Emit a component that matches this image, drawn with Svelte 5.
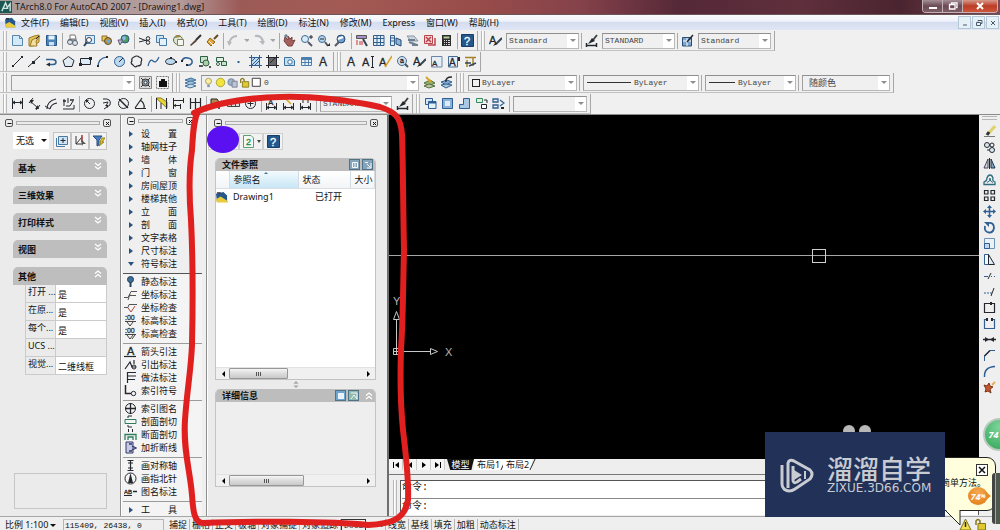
<script lang="ts">
	type Combo = { label: string; value: string; width: number; prefix?: string; cjk?: boolean };
	type Tool = string | Combo;

	const ink = '#24282e';
	const blue = '#2f5f93';
	const pale = '#bcd9ee';
	const gold = '#d8a520';

	// small helpers for the 13x13 glyphs
	const ln = (d: string, c = ink, w = 1) => `<path d="${d}" fill="none" stroke="${c}" stroke-width="${w}"/>`;
	const sh = (d: string, f: string, c = 'none') => `<path d="${d}" fill="${f}" stroke="${c}"/>`;
	const ci = (x: number, y: number, r: number, f = 'none', c = ink) =>
		`<circle cx="${x}" cy="${y}" r="${r}" fill="${f}" stroke="${c}"/>`;
	const tx = (t: string, x: number, y: number, s: number, c = ink) =>
		`<text x="${x}" y="${y}" font-size="${s}" font-family="Liberation Sans, sans-serif" fill="${c}" stroke="${c}" stroke-width=".3">${t}</text>`;
	const dimBar = ln('M1.500 6V13M11.500 6V13M1 10.500H12') + sh('M1 10.500L4 8.500V12.500ZM12 10.500L9 8.500V12.500Z', ink);

	const icons: Record<string, string> = {
		new: sh('M1.500 1.500H8.500L11.500 4.500V11.500H1.500Z', '#d4e9f7', '#5788b0') + ln('M8.500 1.500V4.500H11.500', '#5788b0'),
		open: sh('M1 4L6 2L11 1V8L5 12H1Z', '#e4c25a', '#9b7a28') + sh('M4 6L12 2L8 7L9 12L2 12Z', '#f4dfa0', '#9b7a28') + ln('M8 5L11 2', ink),
		save: sh('M1.500 1.500H11.500V11.500H1.500Z', '#4b83b8', '#27568a') + sh('M3.500 1.500H9.500V5.500H3.500Z', '#e5f0f8') + sh('M4 8H9V11.500H4Z', '#cfe0ee'),
		print: sh('M4 1H9L10 5H4Z', '#fff', '#777') + ci(4, 8, 2.5, '#dde3ea', '#5a6470') + ci(9, 9, 2.5, '#dde3ea', '#5a6470') + ln('M2 6H11', '#5a6470'),
		preview: sh('M2.500 1.500H11.500V9.500H2.500Z', '#dcebf6', '#4d7fae') + ci(6, 6, 2.5, '#fff', '#345') + ln('M4 8L1 12', '#345', 2),
		publish: sh('M2 2H7V7H2Z', '#e9c95c', '#8d6b20') + ci(8, 7, 3.5, '#b99440', '#5d5130') + sh('M6 6H11L9 10Z', '#6fa6d6'),
		globe: ci(8, 5, 4, '#4e9c62', '#2a5c80') + sh('M5 3L8 2L9 5L6 7Z', '#85bde3') + sh('M1 6H6L3 11Z', '#b7c5d6', '#657'),
		cut: ln('M1 4L9 7M1 8L9 6', ink) + ci(10, 4.5, 1.8) + ci(10, 8.5, 1.8),
		copy: sh('M1.500 1.500H8.500V8.500H1.500Z', '#cfe5f5', '#4779a5') + sh('M4.500 4.500H11.500V11.500H4.500Z', '#e3f1fa', '#4779a5'),
		paste: ci(6, 6, 4.5, '#dfe6d6', '#59724a') + sh('M5.500 5.500H11.500V11.500H5.500Z', '#f5f6f0', '#7c8460') + ln('M3 3L8 2', '#a68a3c', 2),
		brush: ln('M12 1L7 6', '#333', 2) + sh('M7 5L8 7L2 12L1 11Z', '#5a4a3a'),
		match: ln('M12 1L8 5', '#6a4a20', 2) + sh('M4 4L9 8L5 12L1 8Z', '#e0a83c', '#91611c') + ln('M3 7L7 11', '#fff'),
		undo: ln('M2 9Q4 2 10 2', '#b5b8bc', 2) + sh('M0 7L5 8L2 12Z', '#b5b8bc'),
		redo: ln('M2 2Q9 1 10 8', '#b5b8bc', 2) + sh('M6 7H12L10 11Z', '#b5b8bc'),
		dd: sh('M0 5H6L3 8Z', '#a5a5a5'),
		pan: sh('M2 3L5 6L5 2L7 5L9 3L9 7L12 6L9 12H5L1 7Z', '#a4605c', '#744') + ln('M1 2H5M3 0V4', '#567'),
		zoomrt: ci(5, 5, 3.5, '#d7eaf7', '#3e6a94') + ln('M8 8L12 12', '#556', 2) + ln('M9 3H13M11 1V5', ink),
		zoomwin: ci(5, 5, 3.5, '#b5d3ea', '#3e6a94') + ln('M8 8L11 12', '#556', 2) + ln('M3 5H7', ink) + sh('M10 12H13V9Z', ink),
		zoomprev: ci(7, 5, 4, '#6d9cc4', '#234e78') + ln('M5 8L1 12', '#556', 2) + ln('M4 5L9 3', '#fff', 2),
		props: sh('M1.500 1.500H11.500V4.500H1.500Z', '#a98fc7', '#555') + ln('M2 6V11M4 8H8M4 10H8', '#c33') + ln('M8 5L12 12', '#345', 2),
		grid: sh('M1.500 1.500H12V11.500H1.500Z', '#dcebf6', '#345f8a') + ln('M2 4.500H12M2 8.500H12M5 2V11M8.500 2V11', '#345f8a'),
		palettes: sh('M1.500 1.500H5.500V11.500H1.500Z', '#dcebf6', '#345f8a') + ln('M2 4H5M2 7H5', '#345f8a') + sh('M7 4L12 6V12L7 10Z', '#8cb5d8', '#27496e'),
		sheet: sh('M1 2H8L12 7L5 7Z', '#cdd6dd', '#8795a2') + ln('M2 6H9M3 8L11 11M6 11H12', '#6e7f90', 2),
		markup: sh('M1.500 1.500H9.500V9.500H1.500Z', '#f3d4d6', '#b9444c') + ln('M3 3L8 8M8 3L3 8M5 11H12V4', '#b9444c', 1.5),
		calc: sh('M2 1H11V12H2Z', '#2c2c2c') + sh('M3.500 2.500H9.500V4.500H3.500Z', '#b3cf9c') + ln('M4 6.500H10M4 8.500H10M4 10.500H10', '#ddd') + ln('M5.500 5V12M7.500 5V12', '#2c2c2c'),
		help: sh('M.5 .5H12.500V12.500H.5Z', '#24588c', '#173e68') + tx('?', 3, 11, 11, '#fff'),
		textA: tx('A', 2, 11, 12),
		textAI: tx('A', 0, 11, 11) + ln('M10.500 2V12M9 1.500H12M9 12.500H12'),
		textEdit: tx('A', 0, 11, 11) + ln('M13 1L6 12', gold, 1.5),
		find: ci(6, 6, 4.5, '#cfe0ee', '#4d6f92') + tx('a', 4, 8, 7) + ln('M9 9L12 12', '#456', 2),
		textStyle: tx('A', 0, 10, 11) + ln('M13 4L8 9', '#345', 2) + sh('M7 8L9 10L4 12Z', ink),
		textScale: sh('M1.500 1.500H12V12H1.500Z', '#e7eef5', '#6b87a6') + tx('A', 2, 11, 8),
		textJust: sh('M1.500 1.500H10.500V12H1.500Z', '#e7eef5', '#456c94') + tx('A', 2, 11, 10) + ln('M12 2V6', ink, 2),
		textSpace: ln('M1 2.500H12M3 5V12M9 3V11', '#a78128', 1.5) + ln('M1 8H7M5 11L12 8', '#345', 1.5),
		dimStyle: ln('M1.500 9V13M11.500 9V13M1 11.500H12', ink, 1.5) + ln('M12 1L8 6', '#444', 2) + sh('M7 4L10 7L3 10Z', ink),
		tableStyle: sh('M1.500 3.500H10.500V12H1.500Z', '#7ba4cc', '#234e78') + ln('M2 7H10M6 4V12', '#fff') + ln('M12 1L6 8', ink, 1.5),
		line: ln('M2 11L11 2') + sh('M1 10H3V12H1ZM10 1H12V3H10Z', ink),
		xline: ln('M0 12L12 1') + sh('M4 6H7V9H4Z', ink),
		pline: ln('M1 4.500H8Q11 5 11 7Q11 9.500 8 9.500H4', blue, 1.5) + sh('M1 9.500L5 7.500V11.500Z', ink),
		polygon: sh('M6.500 1.500L12 5.500L10 11.500H3L1 5.500Z', '#dfeaf3', ink),
		rect: sh('M1.500 3.500H11.500V9.500H1.500Z', '#dcebf6', ink) + sh('M0 8H3V11H0ZM10 2H13V5H10Z', ink),
		arc: ln('M2 12Q2 3 11 2', blue, 1.2) + sh('M1 10H3V12H1ZM10 1H12V3H10Z', ink),
		circle: ci(6.5, 6.5, 5, pale, blue) + ln('M6 7L10 3'),
		cloud: ln('M4 2Q7 0 9 2Q13 3 11 7Q12 11 7 11Q5 13 3 10Q0 8 2 6Q1 3 4 2Z', ink, 1.2),
		spline: ln('M1 11Q3 3 6 6T12 2', blue, 1.2),
		ellipse: '<ellipse cx="6.5" cy="6.500" rx="5" ry="3" fill="#bcd9ee" stroke="#24282e"/>' + sh('M6 2H8V4H6ZM11 6H13V8H11Z', ink),
		ellArc: ln('M1 6Q2 2 7 3Q12 4 11 8Q9 11 6 10', blue, 1.5) + sh('M0 5H2V7H0ZM5 9H7V11H5Z', ink),
		insert: sh('M2.500 1.500H9.500V7.500H2.500Z', '#c9e0c9', '#2c5f44') + ci(8, 8, 3, '#a6cfa9', '#2c5f44') + ln('M1 11H5M11 12H13', ink, 1.5),
		block: sh('M1.500 2.500H8.500V6.500H1.500Z', '#e4f0e4', '#2c5f44') + sh('M6.500 6.500H11.500V10.500H6.500Z', '#c9e0c9', '#2c5f44') + ci(3, 9, 1.5, '#fff', '#2c5f44'),
		point: sh('M5.500 6H7.500V8H5.500Z', blue),
		hatch: sh('M2 2H11V11H2Z', pale) + ln('M2.500 0V13M10.500 0V13M0 2.500H13M0 10.500H13M3 6L6 3M3 10L10 3M6 10L10 6', blue),
		gradient: sh('M2 2H11V11H2Z', '#666') + ln('M2.500 0V13M10.500 0V13M0 2.500H13M0 10.500H13M4 8L9 3', ink),
		region: sh('M1.500 2.500H8.500L11.500 5.500V10.500H1.500Z', '#c4deee', '#3b6f9c') + ci(7, 7, 2.2, '#fff', '#3b6f9c'),
		table: sh('M1.500 2.500H11.500V10.500H1.500Z', '#e7f1f9', '#4d7fae') + ln('M1 4H12', '#4d7fae', 2) + ln('M2 7.500H11M5 3V10M8.500 3V10', '#4d7fae'),
		gear: sh('M.5 .5H12.500V12.500H.5Z', '#dcdcdc', '#888') + ci(6.5, 6.5, 3.5, '#8aa2b9', '#333') + ci(6.5, 6.5, 1.5, '#fff', '#333') + ln('M2 2L4 4M11 2L9 4M2 11L4 9M11 11L9 9', '#333'),
		workspace: sh('M3 5H5V3H9V5H11V11H3Z', '#111') + '<path d="M.5 .5H12.500V12.500H.5Z" fill="none" stroke="#777" stroke-dasharray="2 1"/>',
		layers: sh('M1 4L7 2L12 4L6 6Z', '#7ba9cf', '#47749b') + sh('M1 7L7 5L12 7L6 9Z', '#a9c8e0', '#47749b') + sh('M1 10L7 8L12 10L6 12Z', '#c9dcea', '#47749b'),
		bulb: ci(6.5, 5, 3.5, '#f9ef9c', '#9a9560') + sh('M5 9H8V12H5Z', '#8795a8'),
		sun: ci(6.5, 6.5, 5, '#f2e43c', '#a39a28'),
		freeze: ci(5, 6, 4, '#9fb6cb', '#667f98') + sh('M6 5H12V12H6Z', '#b9c7d4', '#778'),
		lock: sh('M4 5.500H11.500V12H4Z', '#dfc832', '#857518') + ln('M2 7V3Q4 0 6 3V5', '#857518', 1.5),
		box: sh('M1.500 1.500H11V11H1.500Z', '#fff', '#222'),
		warn: sh('M6.500 1L12 12H1Z', '#f3e04a', '#7d7320') + ln('M6.500 4V9', ink, 1.5),
		layerMake: sh('M1 7L7 4L12 7L6 10Z', '#8fae70', '#57703e') + sh('M1 10L6 8L12 10L6 12Z', '#b9c7a5', '#57703e') + ln('M3 1L8 6', gold, 2),
		layerPrev: sh('M1 6L7 4L12 6L6 9Z', '#83abd0', '#32618e') + sh('M1 9L6 8L12 9L6 12Z', '#a9c8e0', '#32618e') + ln('M12 1Q5 1 6 6', ink, 1.5),
		dimLin: ln('M1.500 1V12M11.500 1V12M1 5.500H12') + sh('M1 5.500L4 3.500V7.500ZM12 5.500L9 3.500V7.500Z', ink),
		dimAl: ln('M2 4L10 11M1 6L5 1M8 13L12 8') + sh('M2 3H6L3 7ZM11 12H7L10 8Z', ink),
		dimArc: ln('M2 12Q2 4 11 2M5 12Q6 7 12 6', ink, 1.2) + ln('M0 9L5 12', ink),
		dimOrd: ln('M1 12H12V8M2 2V9M4 9H8L11 4M6 1V6') + ln('M1 4H4M8 3H12', ink, 1.5),
		dimRad: ci(6.5, 6.5, 5) + ln('M3 3L7 7') + sh('M3 3H6L3 6Z', ink),
		dimJog: ln('M3 2Q12 1 10 8L4 12M3 6L8 5L6 9') + sh('M5 8H8V11Z', ink),
		dimDia: ci(6.5, 6.5, 5) + ln('M2 2L11 11', ink, 1.5),
		dimAng: ln('M1 11.500H12M1 11L8 1M6 3Q11 6 10 11', ink, 1.2),
		quick: sh('M1 1L12 11V5L6 1Z', '#e9d436', '#8d7d16') + ln('M1.500 1V12M6 6V12M11.500 1V12'),
		base: ln('M1.500 1V12M1 3.500H11M1 8.500H8M11.500 1V6M8.500 7V12') + sh('M1 8.500L4 7V10Z', ink),
		cont: ln('M1.500 1V12M6.500 1V12M11.500 1V12M1 5.500H12', ink, 1.2),
		tag: sh('M1 2H7L9 5L6 8L1 7Z', '#b18b4d', ink) + ln('M7 8L12 4M9 9V12', ink, 1.5),
		tol: sh('M.5 3.500H12.500V9.500H.5Z', '#ddd', '#444') + ln('M4.500 4V9M8.500 4V9', '#444'),
		center: ci(6.5, 6.5, 5) + ln('M6.500 3.500V9.500M3.500 6.500H9.500'),
		dimEdit: dimBar + tx('A', 3, 8, 8),
		dimTedit: dimBar + ln('M3 1L9 7', gold, 1.5),
		dimUpd: dimBar + ln('M2 2.500H11M4 1V6M9 1V6'),
		vp1: sh('M1.500 1.500H8.500V7.500H1.500Z', '#cfe5f5', blue) + sh('M4.500 4.500H12V11.500H4.500Z', '#e3f1fa', blue) + ln('M5 5.500H12', blue, 2),
		vp2: sh('M1.500 1.500H11.500V11.500H1.500Z', '#8ab2d6', blue) + sh('M4 4H9V9H4Z', '#dcecf8'),
		vp3: sh('M5.500 1.500H11.500V11.500H1.500V7.500H5.500Z', '#a9c8e4', blue),
		vp4: sh('M1.500 1.500H7.500V5.500H1.500Z', '#e3f0d8', '#386') + sh('M6.500 7.500H11.500V11.500H6.500Z', '#fff', ink) + ln('M9 3H12V6', ink),
		vp5: ln('M1 2H6V5H1ZM1 8H6V11H1ZM8 3L12 6L8 9', blue, 1.3) + ln('M9 11H12', ink, 2),
		erase: ln('M1 11.500H12', '#777') + ln('M12 1L5 9', '#dfd36a', 3) + ln('M6 7L4 10', '#333', 3),
		copy2: ci(4, 4, 2.5, '#dce8f1', ink) + ci(9, 4, 2) + ci(9, 9, 2.5, '#dce8f1', ink) + ln('M4 9H6'),
		mirror: sh('M5 2V11H1Z', '#cdd9e2', '#445') + sh('M8 2V11H12Z', '#7da4c4', '#234') + ln('M6.500 1V12'),
		offset: ln('M1 11.500V9Q4 8 4 5Q5 2 7 2Q9 2 10 5Q9 8 12 9V11.500Z', '#2f6d7e', 1.3) + ln('M4 9.500Q7 9 7 5Q7 9 10 9.500', '#2f6d7e'),
		array: ln('M1.500 1.500H5V5H1.500ZM8 1.500H11.500V5H8ZM1.500 8H5V11.500H1.500ZM8 8H11.500V11.500H8Z', ink, 1.2),
		move: ln('M6.500 2V11M2 6.500H11', blue, 1.5) + sh('M6.500 0L9 3H4ZM6.500 13L9 10H4ZM0 6.500L3 4V9ZM13 6.500L10 4V9Z', blue),
		rotate: ln('M5 2Q11 1 11 7Q10 12 6 11.500Q1 11 2 5', blue, 1.8) + sh('M1 1H6V6Z', blue),
		scale: sh('M1.500 1.500H11.500V11.500H1.500Z', '#eaf2f8', '#6e93b5') + sh('M1.500 6.500H6.500V11.500H1.500Z', pale, blue),
		stretch: sh('M1.500 1.500H5.500V11.500H1.500Z', '#f5f8fb', blue) + sh('M5.500 1.500L11.500 11.500H5.500Z', '#dcebf6', ink),
		trim: ln('M1 7.500H5M8 7.500H9M11 7.500H12', blue) + ln('M5 10L8 4', ink),
		extend: ln('M1 8H3M4 8H6M7 8H9', blue) + ln('M8 11L11 3', ink),
		breakpt: ln('M1.500 2.500H11.500V11.500H1.500Z', ink, 1.2) + sh('M7 1H9V4H7Z', ink),
		breakk: ln('M4 2.500H1.500V11.500H11.500V2.500H9', blue, 1.2) + sh('M3 1H5V4H3ZM8 1H10V4H8Z', ink),
		join: ln('M0 6.500H13', ink, 1.5) + sh('M6 6.500L2 4V9ZM7 6.500L11 4V9Z', ink),
		chamfer: ln('M1.500 12V7L7 1.500H12', blue) + ln('M1.500 7L7 1.500', ink, 1.5),
		fillet: ln('M1.500 12Q1 2 12 1.500', blue, 1.5),
		explode: sh('M1 4L4 5L6 2L7 5L10 6L7 8L8 12L5 10L2 11L3 8Z', '#c4572e', '#7b341c') + ln('M9 4L12 1', '#e0b060', 2),
		selPlus: sh('M2.500 2.500H11.500V10.500H2.500Z', '#cfe5f5', '#4779a5') + ln('M7 4V9M4.500 6.500H9.500', ink) + ln('M.5 4V12.500H9', '#4779a5'),
		selArrow: ln('M2 2V10H8M2 10L8 3', '#333') + ln('M8 1V8', '#a33', 1.5) + sh('M7 5L12 10H9L8 12Z', '#555'),
		filter: sh('M1 2H10L7 6V11L5 12V6Z', '#4a7fc0', '#274d7f') + sh('M10 4H13L10 8H12L7 12L9 8H8Z', '#e9cf2e', '#96851b'),
		refresh: sh('M1.500 .5H9L11.500 3V12.500H1.500Z', '#f2faf3', '#5b9c70') + tx('2', 4, 10, 9, '#1d8a45'),
		dwg: sh('M0 3L8 1L12 5V12H1Z', '#27588c') + sh('M0 9L5 6L13 11V12.500H1Z', '#eacb3c') + ln('M1 2H5', ink, 1.5),
		// symbol list
		l0: ci(6.5, 4.5, 3, '#3f6d93', '#21435f') + ln('M6.500 7V12', '#21435f', 2),
		l1: ln('M0 9.500H4L7 3.500H13M4 12L6 6M6 7.500H12', '#555'),
		l2: ln('M0 6.500H4L5 3.500H13', '#555') + ln('M4 7L7 11L11 5', '#a44'),
		l3: ln('M1 7.500H12M3 8L6 12L9 8', '#444') + tx(':00', 1, 6, 7, '#333'),
		l4: ln('M1 7.500H12M3 8L6 12L9 8M8 12L11 8', '#444') + tx(':00', 1, 6, 7, '#333'),
		l5: tx('A', 3, 10, 11) + ln('M0 11.500H12', ink, 1.2),
		l6: ln('M1 11L6 4L8 9H12M10 2V6', ink, 1.2) + ci(10, 9, 2),
		l7: ln('M3.500 12V1.500H12M3 5H12M3 8.500H11', ink, 1.2),
		l8: ln('M1.500 1V9.500H7', ink, 1.5) + ci(9.5, 9.5, 2.2),
		l9: ci(6.5, 6.5, 5) + ln('M6.500 1V12M1 6.500H12', ink, 1.3),
		l10: ln('M1 4.500H12V8.500H1Z', '#2e7d5c') + ln('M4 3V1H8M4 10V12H8', ink),
		l11: ln('M1 12V6.500H12V12M4 12V9H9V12', '#2e7d5c', 1.3) + ln('M4.500 1V4M8.500 1V4', ink),
		l12: sh('M2 1H9V12H2Z', '#c5cbe6', '#34386b') + ln('M5 3H8M5 10H8M8 5L12 7L8 9', '#34386b', 1.3),
		l13: ln('M6.500 2V11M3.500 1.500H9.500M3.500 11.500H9.500M4 4H9M4 9H9', ink, 1.2),
		l14: ci(6.5, 6.5, 5.5) + sh('M6.500 1L9 11H4Z', ink),
		l15: ln('M0 10.500H8', ink) + tx('AB', 0, 9, 6) + ln('M9 6.500H13', ink, 1.5)
	};

	const rows: Tool[][][] = [
		[
			['new', 'open', 'save', '|', 'print', 'preview', 'publish', 'globe', '|', 'cut', 'copy', 'paste', 'brush', 'match', '|', 'undo', 'dd', 'redo', 'dd', '|', 'pan', 'zoomrt', 'zoomwin', 'zoomprev', '|', 'props', 'grid', 'palettes', 'sheet', 'markup', 'calc', '|', 'help'],
			['textStyle', { label: '文字样式', value: 'Standard', width: 73 }, '|', 'dimStyle', { label: '标注样式', value: 'STANDARD', width: 73 }, '|', 'tableStyle', { label: '表格样式', value: 'Standard', width: 73 }]
		],
		[
			['line', 'xline', 'pline', 'polygon', 'rect', 'arc', 'circle', 'cloud', 'spline', 'ellipse', 'ellArc', 'insert', 'block', 'point', 'hatch', 'gradient', 'region', 'table', 'textA'],
			['textA', 'textAI', 'textEdit', 'find', 'textStyle', 'textScale', 'textJust', 'textSpace']
		],
		[
			[{ label: '工作空间', value: '', width: 124 }, 'gear', 'workspace'],
			['layers', { label: '图层', value: '0', width: 218, prefix: 'layer' }, 'layerMake', 'layerPrev'],
			[{ label: '颜色', value: 'ByLayer', width: 109, prefix: 'box' }, '|', { label: '线型', value: 'ByLayer', width: 116, prefix: 'long' }, '|', { label: '线宽', value: 'ByLayer', width: 91, prefix: 'short' }, '|', { label: '打印样式', value: '随颜色', width: 88, cjk: true }]
		],
		[
			['dimLin', 'dimAl', 'dimArc', 'dimOrd', '|', 'dimRad', 'dimJog', 'dimDia', 'dimAng', '|', 'quick', 'base', 'cont', '|', 'tag', 'tol', 'center', '|', 'dimEdit', 'dimTedit', 'dimUpd', '|', { label: '当前标注样式', value: 'STANDARD', width: 72 }, 'dimStyle'],
			['vp1', 'vp2', 'vp3', 'vp4', 'vp5', '|', { label: '视口比例', value: '', width: 74 }]
		]
	];

	const menus = ['文件(F)', '编辑(E)', '视图(V)', '插入(I)', '格式(O)', '工具(T)', '绘图(D)', '标注(N)', '修改(M)', 'Express', '窗口(W)', '帮助(H)'];
	const sections = ['基本', '三维效果', '打印样式', '视图', '其他'];
	const other = [
		['打开 ...', '是'],
		['在原...', '是'],
		['每个...', '是'],
		['UCS ...', ''],
		['视觉...', '二维线框']
	];
	const topItems = ['设|置', '轴网柱子', '墙|体', '门|窗', '房间屋顶', '楼梯其他', '立|面', '剖|面', '文字表格', '尺寸标注', '符号标注'];
	const symbolGroups = [
		['静态标注', '坐标标注', '坐标检查', '标高标注', '标高检查'],
		['箭头引注', '引出标注', '做法标注', '索引符号'],
		['索引图名', '剖面剖切', '断面剖切', '加折断线'],
		['画对称轴', '画指北针', '图名标注']
	];
	const offsets = [0, 5, 9, 13];
	const modify = ['erase', 'copy2', 'mirror', 'offset', 'array', 'move', 'rotate', 'scale', 'stretch', 'trim', 'extend', 'breakpt', 'breakk', 'join', 'chamfer', 'fillet', 'explode'];
	const toggles = ['捕捉', '栅格', '正交', '极轴', '对象捕捉', '对象追踪', 'DUCS', 'DYN', '线宽', '基线', '填充', '加粗', '动态标注'];

	let pressed = $state<string[]>(['DUCS']);

	function toggle(name: string) {
		pressed = pressed.includes(name) ? pressed.filter((p) => p !== name) : [...pressed, name];
	}
</script>

{#snippet icon(name: string)}
	<svg class="icon" viewBox="0 0 13 13" aria-hidden="true">{@html icons[name]}</svg>
{/snippet}

{#snippet combo(c: Combo)}
	<span class="combo" style="width: {c.width}px">
		{#if c.prefix === 'layer'}
			{#each ['bulb', 'sun', 'freeze', 'lock', 'box'] as n}
				<span class="mini">{@render icon(n)}</span>
			{/each}
		{:else if c.prefix === 'box'}
			<span class="swatch"></span>
		{:else if c.prefix}
			<span class="stroke {c.prefix}"></span>
		{/if}
		<select aria-label={c.label} class:cjk={c.cjk}><option>{c.value}</option></select>
		<i></i>
	</span>
{/snippet}

{#snippet grip()}
	<div class="grip">
		<button class="knob" aria-label="自动隐藏"><svg viewBox="0 0 7 7"><path d="M1.500 3.500H5.500" /></svg></button>
		<span></span>
		<button class="knob" aria-label="关闭"><svg viewBox="0 0 7 7"><path d="M2 2L5 5M5 2L2 5" /></svg></button>
	</div>
{/snippet}

{#snippet chevron(up: boolean)}
	<svg class="chevron" class:up viewBox="0 0 8 8"><path d="M1 1L4 3.500L7 1M1 4.500L4 7L7 4.500" /></svg>
{/snippet}

{#snippet scrollbar(thumb: number)}
	<div class="scroll">
		<button aria-label="向左"><svg viewBox="0 0 4 6"><path d="M4 0V6L1 3Z" /></svg></button>
		<div class="thumb" style="width: {thumb}%"><b></b><b></b><b></b></div>
		<button class="end" aria-label="向右"><svg viewBox="0 0 4 6"><path d="M0 0V6L3 3Z" /></svg></button>
	</div>
{/snippet}

<div class="app">
	<header class="title">
		<svg class="logo" viewBox="0 0 13 13"><path fill="#1c5751" d="M0 0H13V13H0Z" /><path d="M2 11L6 2L8 7L11 3V11M4 8H9" fill="none" stroke="#cfe9e2" stroke-width="1.500" /></svg>
		<h1>TArch8.0 For AutoCAD 2007 - [Drawing1.dwg]</h1>
		<div class="winbtns">
			<button aria-label="最小化"><svg viewBox="0 0 10 8"><path d="M1 6H9" stroke-width="2" /></svg></button>
			<button aria-label="还原"><svg viewBox="0 0 10 8"><path d="M3.500 2V.8H9V5.500H8M1.500 2.500H7V7H1.500Z" stroke-width="1.300" /></svg></button>
			<button class="close" aria-label="关闭"><svg viewBox="0 0 10 8"><path d="M2 1L8 7M8 1L2 7" stroke-width="2" /></svg></button>
		</div>
	</header>

	<nav class="menu">
		{@render icon('dwg')}
		{#each menus as m}
			<button>{m}</button>
		{/each}
		<div class="mdi">
			<button aria-label="最小化文档"><svg viewBox="0 0 8 8"><path d="M2 6H6" /></svg></button>
			<button aria-label="还原文档"><svg viewBox="0 0 8 8"><path d="M3 2.500V1.500H7V4.500H6M1.500 3.500H5.500V6.500H1.500Z" /></svg></button>
			<button aria-label="关闭文档"><svg viewBox="0 0 8 8"><path d="M2 2L6 6M6 2L2 6" /></svg></button>
		</div>
	</nav>

	<div class="toolbars">
		{#each rows as row}
			<div class="row">
				{#each row as group}
					<div class="group">
						<span class="handle"></span>
						{#each group as tool}
							{#if tool === '|'}
								<span class="sep"></span>
							{:else if typeof tool === 'string'}
								<button class="tool" class:drop={tool === 'dd'} aria-label={tool}>{@render icon(tool)}</button>
							{:else}
								{@render combo(tool)}
							{/if}
						{/each}
					</div>
				{/each}
			</div>
		{/each}
	</div>

	<main>
		<aside class="props">
			{@render grip()}
			<div class="picker">
				<select aria-label="选择对象"><option>无选</option></select>
				<i></i>
				<div class="btns">
					{#each ['selPlus', 'selArrow', 'filter'] as n}
						<button aria-label={n}>{@render icon(n)}</button>
					{/each}
				</div>
			</div>
			{#each sections as s, i}
				<button class="section">{s}{@render chevron(i === sections.length - 1)}</button>
			{/each}
			<table>
				<tbody>
					{#each other as [k, v]}
						<tr><th scope="row">{k}</th><td class:blank={!v}>{v}</td></tr>
					{/each}
				</tbody>
			</table>
			<div class="hint"></div>
		</aside>

		<aside class="tmenu">
			{@render grip()}
			<ul>
				{#each topItems as item, i}
					<li>
						<span class="mark" class:open={i === topItems.length - 1}></span>
						<button>{#each item.split('|') as part}<span>{part}</span>{/each}</button>
					</li>
				{/each}
			</ul>
			{#each symbolGroups as g, gi}
				<ul class:first={gi === 0} class="ruled">
					{#each g as item, i}
						<li>{@render icon('l' + (offsets[gi] + i))}<button>{item}</button></li>
					{/each}
				</ul>
			{/each}
			<ul class="ruled">
				<li><span class="mark"></span><button><span>工</span><span>具</span></button></li>
			</ul>
		</aside>

		<aside class="xref">
			{@render grip()}
			<div class="xtools">
				<button class="attach" aria-label="附着">{@render icon('dwg')}</button>
				<button class="wide" aria-label="刷新">{@render icon('refresh')}<i></i></button>
				<button aria-label="帮助">{@render icon('help')}</button>
			</div>
			<section class="files">
				<h2>文件参照
					<button class="sq" aria-label="列表图"><svg viewBox="0 0 10 10"><path d="M2.500 2.500H7.500V7.500H2.500ZM5 3V8" /></svg></button>
					<button class="sq" aria-label="树状图"><svg viewBox="0 0 10 10"><path d="M2 2.500H5M4 4L7.500 7.500M8 3V8H4" /></svg></button>
				</h2>
				<div class="list">
					<table>
						<thead>
							<tr><th class="c0"></th><th class="c1 sorted">参照名</th><th class="c2">状态</th><th>大小</th></tr>
						</thead>
						<tbody>
							<tr><td>{@render icon('dwg')}</td><td>Drawing1</td><td class="state">已打开</td><td></td></tr>
						</tbody>
					</table>
				</div>
				{@render scrollbar(37)}
			</section>
			<div class="split"><svg viewBox="0 0 6 8"><path d="M0 3H6L3 0ZM0 5H6L3 8Z" /></svg></div>
			<section class="details">
				<h2>详细信息
					<button class="sq lit" aria-label="详细信息"><svg viewBox="0 0 10 10"><path d="M2.500 2.500H7.500V7.500H2.500Z" fill="#e4f0fa" /></svg></button>
					<button class="sq green" aria-label="预览"><svg viewBox="0 0 10 10"><path d="M2 8L5 4L8 8M2 2H8V8" /></svg></button>
					{@render chevron(true)}
				</h2>
				<div class="list"></div>
				{@render scrollbar(47)}
			</section>
		</aside>

		<div class="work">
			<div class="canvas">
				<div class="hair"></div>
				<div class="pick"></div>
				<svg class="ucs" viewBox="0 0 64 64">
					<path d="M3.500 53.500H9.500V59.500H3.500ZM3.500 56.500H40M6.500 59V24M3.500 24.500H9.500L6.500 16.500ZM40.500 53.500V59.500L47.500 56.500Z" />
					<text x="3" y="10">Y</text>
					<text x="55" y="61">X</text>
				</svg>
				<div class="fingers"><b></b><b></b></div>
			</div>
			<div class="tabs">
				<button aria-label="第一个"><svg viewBox="0 0 8 8"><path d="M1 1H2V7H1ZM7 1V7L3 4Z" /></svg></button>
				<button aria-label="上一个"><svg viewBox="0 0 8 8"><path d="M6 1V7L2 4Z" /></svg></button>
				<button aria-label="下一个"><svg viewBox="0 0 8 8"><path d="M2 1V7L6 4Z" /></svg></button>
				<button aria-label="最后一个"><svg viewBox="0 0 8 8"><path d="M6 1H7V7H6ZM1 1V7L5 4Z" /></svg></button>
				<button class="tab on">模型</button>
				<button class="tab">布局1</button>
				<button class="tab">布局2</button>
			</div>
			<div class="command">
				<span class="handle"></span>
				<div class="lines">
					<p>命令:</p>
					<label><span>命令:</span><input type="text" aria-label="命令" /></label>
				</div>
			</div>
		</div>

		<aside class="modify">
			{#each modify as n}
				<button aria-label={n}>{@render icon(n)}</button>
			{/each}
		</aside>
	</main>

	<footer>
		<button class="scale">比例 1:100 <i></i></button>
		<output>115409, 26438, 0</output>
		{#each toggles as t}
			<button class="tgl" class:mono={t.startsWith('D')} class:pressed={pressed.includes(t)} onclick={() => toggle(t)}>{t}</button>
		{/each}
		<span class="tray">{@render icon('warn')}{@render icon('lock')}</span>
	</footer>

	<div class="balloon">
		<button aria-label="关闭提示"><svg viewBox="0 0 10 10"><path d="M2 2L8 8M8 2L2 8" /></svg></button>
		<p>简单方法。</p>
		<svg class="tail" viewBox="0 0 20 18"><path class="body" d="M0 0L15 16V0Z" /><path d="M0 1L15 16V1" /></svg>
	</div>
	<div class="gauge"></div>
	<div class="pct orange">74<small>%</small></div>
	<div class="pct green">74</div>

	<div class="brand">
		<svg viewBox="0 0 36 36">
			<path d="M9 31V6Q10 2 15 4L31 13Q35 17 31 22L16 32Q10 36 5 32Q3 30 3 27V8" />
			<path d="M14 9V23Q14 27 18 25L22 22" />
			<path class="solid" d="M15 13L23 18L15 23ZM25 14H27V22H25Z" />
		</svg>
		<div>
			<strong>溜溜自学</strong>
			<span>ZIXUE.3D66.COM</span>
		</div>
	</div>

	<svg class="marker" viewBox="0 0 1000 530">
		<path d="M198 111C193 122 193 135 192 150C189 170 189 195 191 220C193 260 193 300 192 345C191 370 187 390 185 420C183 450 190 470 192 495C193 510 194 523 203 523C250 521 330 521 368 525C390 524 405 520 408 500C409 480 406 455 403 430C400 400 400 380 401 350C403 320 403 290 404 250C403 200 403 160 402 135C401 118 396 112 380 107C350 100 310 96 280 97C245 98 215 103 194 113" />
		<ellipse cx="223" cy="139.500" rx="16" ry="13.500" />
	</svg>
</div>

<style>
	:global(body) {
		margin: 0;
		background: #ededed;
	}

	.app {
		position: relative;
		display: flex;
		flex-direction: column;
		min-height: 100vh;
		overflow: hidden;
		background: #eeeeee;
		color: #111;
		font: 9px/13px 'Noto Sans', 'Noto Sans CJK SC', sans-serif;
	}

	button,
	select,
	input {
		margin: 0;
		padding: 0;
		border: 0;
		background: none;
		color: inherit;
		font: inherit;
		appearance: none;
	}

	button {
		display: flex;
		align-items: center;
		justify-content: center;
	}

	ul,
	h1,
	h2,
	p {
		margin: 0;
		padding: 0;
		list-style: none;
		font-weight: normal;
	}

	.icon {
		display: block;
		flex: none;
		width: 13px;
		height: 13px;
	}

	/* title and menu */
	.title {
		display: flex;
		align-items: center;
		height: 15px;
		background: linear-gradient(90deg, #a99a9a 0, #b39b9b 18%, #9c5a57 24%, #a35a54 34%, #984c4a 48%, #85424a 58%, #552838 68%, #5f2f3c 80%, #4a2430 90%, #7b4a54 100%);
		border-bottom: 1px solid #6c5558;
		box-sizing: border-box;
	}

	.title h1 {
		flex: 1;
		padding-left: 3px;
		font-family: 'Open Sans', sans-serif;
		font-size: 9px;
		line-height: 14px;
	}

	.logo {
		width: 12px;
		height: 12px;
	}

	.winbtns {
		display: flex;
		align-self: flex-start;
		margin-right: 2px;
		border: 1px solid #c4b2b7;
		border-top: 0;
		border-radius: 0 0 4px 4px;
		overflow: hidden;
	}

	.winbtns button {
		width: 20px;
		height: 12px;
		background: linear-gradient(#a58f96, #6b4a55 50%, #7d5f69);
		border-right: 1px solid #c4b2b7;
	}

	.winbtns .close {
		width: 34px;
		border: 0;
		background: linear-gradient(#d79a8c, #bb3c26 50%, #d0563b);
	}

	.winbtns svg {
		width: 10px;
		height: 8px;
		fill: none;
		stroke: #fff;
	}

	.menu {
		display: flex;
		align-items: center;
		gap: 11px;
		height: 15px;
		padding-left: 5px;
		background: linear-gradient(#fafbfd 0, #f0f3fa 40%, #d5ddf0 50%, #dfe6f5 100%);
	}

	.menu .icon {
		width: 11px;
		height: 11px;
		margin-right: -6px;
	}

	.mdi {
		display: flex;
		gap: 1px;
		margin-left: auto;
		padding-right: 1px;
	}

	.mdi button {
		width: 13px;
		height: 13px;
		background: #e6f0f7;
		border: 1px solid #b5c7d6;
		box-sizing: border-box;
	}

	.mdi svg {
		width: 8px;
		height: 8px;
		flex: none;
		fill: none;
		stroke: #4b5a6b;
	}

	/* toolbars */
	.toolbars {
		display: flex;
		flex-direction: column;
		gap: 1px;
		padding-top: 1px;
		background: #f0f0f0;
		border-bottom: 1px solid #8b8b8b;
	}

	.row {
		display: flex;
		height: 20px;
		box-sizing: border-box;
	}

	.group {
		display: flex;
		align-items: center;
		gap: 4px;
		padding: 0 3px;
		border-right: 1px solid #a6a6a6;
		border-bottom: 1px solid #c2c2c2;
	}

	.handle {
		flex: none;
		align-self: stretch;
		width: 2px;
		border: solid #b9b9b9;
		border-width: 0 1px;
		box-shadow: inset 1px 0 #fff;
	}

	.sep {
		width: 1px;
		height: 16px;
		margin-right: -1px;
		background: #a9a9a9;
	}

	.combo + .sep {
		margin-left: -2px;
	}

	.tool.drop {
		width: 5px;
		overflow: hidden;
		justify-content: flex-start;
	}

	.combo {
		display: flex;
		align-items: center;
		height: 16px;
		border: 1px solid #b8b8b8;
		border-top-color: #8f8f8f;
		border-left-color: #9f9f9f;
		box-sizing: border-box;
		background: #f0f0f0;
	}

	.combo select {
		flex: 1;
		min-width: 0;
		height: 14px;
		padding-left: 2px;
		color: #444;
		font: 8px/14px 'Liberation Mono', monospace;
	}

	.combo select.cjk {
		padding-left: 6px;
		font: 9px/14px 'Noto Sans CJK SC', sans-serif;
	}

	.combo i {
		width: 11px;
		height: 14px;
		background: #fff;
		display: flex;
		align-items: center;
		justify-content: center;
	}

	.combo i::after,
	.picker i::after,
	.xtools i,
	footer i {
		content: '';
		border: solid transparent;
		border-width: 3px 3px 0;
		border-top-color: #8e8e8e;
	}

	.mini {
		margin-left: 1px;
	}

	.mini .icon {
		width: 11px;
		height: 11px;
	}

	.swatch {
		width: 6px;
		height: 6px;
		margin: 0 0 0 3px;
		border: 1px solid #222;
	}

	.stroke {
		height: 1px;
		margin: 0 1px 0 3px;
		background: #333;
	}

	.stroke.long {
		width: 44px;
	}

	.stroke.short {
		width: 26px;
	}

	/* work area */
	main {
		display: flex;
		flex: 1;
	}

	.grip {
		display: flex;
		align-items: center;
		gap: 3px;
		height: 16px;
		box-sizing: border-box;
	}

	.grip > span {
		flex: 1;
		height: 2px;
		border: 1px solid #adadad;
	}

	.knob {
		width: 8px;
		height: 8px;
		border: 1px solid #555;
		border-radius: 2px;
		box-sizing: border-box;
	}

	.knob svg {
		width: 7px;
		height: 7px;
		flex: none;
		stroke: #111;
	}

	.chevron {
		width: 8px;
		height: 8px;
		fill: none;
		stroke: #fff;
		stroke-width: 1.2;
	}

	.chevron.up {
		transform: rotate(180deg);
	}

	.props {
		display: flex;
		flex-direction: column;
		flex: none;
		width: 121px;
		padding: 0 13px 7px;
		box-sizing: border-box;
		border-right: 1px solid #8d8d8d;
		background: #ebebeb;
	}

	.props .grip {
		margin: 0 -4px 0 -8px;
	}

	.picker {
		display: flex;
		align-items: center;
		height: 19px;
		margin-bottom: 9px;
	}

	.picker select {
		width: 26px;
		height: 17px;
		padding-left: 3px;
		background: #fff;
	}

	.picker i {
		display: flex;
		align-items: center;
		justify-content: center;
		width: 10px;
		height: 17px;
		background: #fff;
	}

	.picker i::after {
		border-top-color: #111;
	}

	.btns {
		display: flex;
		margin-left: auto;
	}

	.btns button {
		width: 18px;
		height: 18px;
		background: #f3f3f3;
		border: 1px solid #c4c4c4;
		box-sizing: border-box;
	}

	.section {
		flex: none;
		justify-content: space-between;
		height: 18px;
		margin-bottom: 9px;
		padding: 0 5px;
		border-radius: 5px 5px 0 0;
		background: #bebebe;
		font-weight: bold;
	}

	.section .chevron {
		margin-bottom: 5px;
	}

	.props table {
		width: 82px;
		margin: -9px 0 0 auto;
		border-collapse: collapse;
		table-layout: fixed;
	}

	.props th,
	.props td {
		height: 17px;
		padding: 0 0 0 2px;
		border: 1px solid #cbcbcb;
		border-top: 0;
		font-weight: normal;
		text-align: left;
		white-space: nowrap;
	}

	.props th {
		width: 27px;
		vertical-align: top;
	}

	.props td {
		padding-top: 2px;
		height: 15px;
		background: #fff;
	}

	.props td.blank {
		background: none;
	}

	.hint {
		height: 34px;
		margin: auto 0 0 1px;
		border: 1px solid #c6c6c6;
	}

	/* drawing-symbol menu */
	.tmenu {
		flex: none;
		width: 86px;
		padding-right: 4px;
		border-left: 1px solid #fff;
		border-right: 1px solid #8d8d8d;
		box-sizing: border-box;
		background: #efefef;
	}

	.tmenu .grip {
		padding: 0 8px 0 5px;
		height: 12px;
	}

	.tmenu ul {
		padding-bottom: 3px;
	}

	.tmenu ul.ruled {
		margin-left: 1px;
		padding-top: 1px;
		border-top: 1px solid #9b9b9b;
		background: #f4f4f4;
	}

	.tmenu ul.first {
		border-top-color: #555;
	}

	.tmenu ul.ruled:last-child {
		padding-bottom: 0;
	}

	.tmenu li {
		display: flex;
		align-items: center;
		height: 13px;
		padding-left: 1px;
	}

	.tmenu .ruled li {
		padding-left: 0;
	}

	.tmenu li button {
		width: 36px;
		margin-left: 4px;
		justify-content: space-between;
		white-space: nowrap;
	}

	.tmenu li > :first-child {
		margin-left: 1px;
	}

	.mark {
		display: flex;
		width: 13px;
		justify-content: center;
	}

	.mark::after {
		content: '';
		border: solid transparent;
		border-width: 3px 0 3px 4px;
		border-left-color: #27517f;
	}

	.mark.open::after {
		border-width: 4px 3px 0;
		border-color: #27517f transparent transparent;
	}

	/* external references */
	.xref {
		display: flex;
		flex-direction: column;
		flex: none;
		width: 182px;
		padding: 0 11px 29px 7px;
		border-left: 1px solid #fff;
		border-right: 2px solid #6f6f6f;
		box-sizing: border-box;
		background: #ebebeb;
	}

	.xref .grip {
		margin: 0 -2px 0 -1px;
	}

	.xtools {
		display: flex;
		margin: 2px 0 8px -7px;
		height: 17px;
	}

	.xtools button {
		width: 20px;
		height: 17px;
		border: 1px solid #d0d0d0;
		box-sizing: border-box;
		background: #f2f2f2;
	}

	.xtools .attach {
		width: 31px;
	}

	.xtools .wide {
		width: 24px;
		gap: 2px;
	}

	.xtools i {
		border-width: 3px 2px 0;
		border-top-color: #444;
	}

	.xref section {
		display: flex;
		flex-direction: column;
		border: 1px solid #c3c3c3;
		border-top: 0;
		border-radius: 5px 5px 0 0;
		overflow: hidden;
	}

	.files {
		flex: 1;
		background: #fff;
	}

	.details {
		height: 97px;
		background: #eeeeee;
	}

	.xref h2 {
		display: flex;
		align-items: center;
		gap: 2px;
		height: 13px;
		padding: 0 2px 0 6px;
		background: #bdbdbd;
		font-size: 9px;
		font-weight: bold;
	}

	.sq {
		width: 11px;
		height: 11px;
		background: #86a5ba;
		border: 1px solid #4f7288;
		box-sizing: border-box;
	}

	.sq:first-of-type {
		margin-left: auto;
	}

	.sq.lit {
		background: #6fa3d0;
	}

	.sq.green {
		background: #8fb9ad;
	}

	.sq svg {
		width: 10px;
		height: 10px;
		flex: none;
		fill: none;
		stroke: #f2f8fb;
	}

	h2 .chevron {
		margin-left: 4px;
	}

	.xref .list {
		flex: 1;
	}

	.xref table {
		width: 100%;
		border-collapse: collapse;
		table-layout: fixed;
	}

	.xref thead th {
		height: 17px;
		padding: 0 0 0 4px;
		border-right: 1px solid #d5dde3;
		border-bottom: 1px solid #dadfe3;
		background: linear-gradient(#fff, #f2f4f6);
		font-weight: normal;
		text-align: left;
		white-space: nowrap;
		box-sizing: border-box;
	}

	.xref thead .sorted {
		position: relative;
		background: linear-gradient(#f3fafd, #c8e6f5);
	}

	.sorted::after {
		content: '';
		position: absolute;
		top: 1px;
		left: 50%;
		border: solid transparent;
		border-width: 0 2px 2px;
		border-bottom-color: #47758f;
	}

	.c0 {
		width: 13px;
	}

	.c1 {
		width: 69px;
	}

	.c2 {
		width: 52px;
	}

	.xref td {
		height: 16px;
		padding: 0;
		white-space: nowrap;
	}

	.xref td .icon {
		width: 12px;
		height: 12px;
	}

	.xref td + td {
		padding-left: 4px;
	}

	.xref td.state {
		padding-left: 17px;
	}

	.scroll {
		display: flex;
		height: 11px;
		background: #f0f0f0;
		border-top: 1px solid #e2e2e2;
	}

	.scroll button {
		width: 13px;
	}

	.scroll button.end {
		margin-left: auto;
	}

	.scroll svg {
		width: 4px;
		height: 6px;
	}

	.thumb {
		display: flex;
		align-items: center;
		justify-content: center;
		gap: 1px;
		border: 1px solid #979797;
		border-radius: 1px;
		box-sizing: border-box;
		background: linear-gradient(#f5f5f5, #dcdcdc 50%, #c9c9c9);
	}

	.thumb b {
		width: 1px;
		height: 4px;
		background: #555;
	}

	.split {
		display: flex;
		align-items: center;
		justify-content: center;
		height: 9px;
	}

	.split svg {
		width: 6px;
		height: 7px;
		fill: #a5a5a5;
	}

	/* model space */
	.work {
		display: flex;
		flex: 1;
		flex-direction: column;
		min-width: 0;
	}

	.canvas {
		position: relative;
		flex: 1;
		background: #000;
		overflow: hidden;
	}

	.hair {
		position: absolute;
		top: 140px;
		left: 0;
		right: 0;
		height: 1px;
		background: #a5a5a5;
	}

	.pick {
		position: absolute;
		top: 134px;
		left: 423px;
		width: 12px;
		height: 12px;
		border: 1px solid #d0d0d0;
	}

	.ucs {
		position: absolute;
		top: 180px;
		left: 1px;
		width: 64px;
		height: 64px;
		fill: none;
		stroke: #c8c8c8;
	}

	.ucs text {
		fill: #b5b5b5;
		stroke: none;
		font: 11px 'Liberation Sans', sans-serif;
	}

	.fingers {
		position: absolute;
		right: 108px;
		bottom: 22px;
		display: flex;
		gap: 4px;
	}

	.fingers b {
		width: 12px;
		height: 12px;
		border-radius: 50%;
		background: #b8b8b8;
	}

	.tabs {
		display: flex;
		height: 11px;
		background: #eee;
	}

	.tabs button {
		width: 14px;
		border-right: 1px solid #ccc;
		box-sizing: border-box;
		background: #f6f6f6;
	}

	.tabs svg {
		width: 8px;
		height: 8px;
	}

	.tabs .tab {
		position: relative;
		width: 29px;
		border: 0;
		line-height: 10px;
		background: #fff;
	}

	.tabs .tab::after {
		content: '';
		position: absolute;
		top: 0;
		bottom: 0;
		right: -1px;
		width: 1px;
		background: #222;
		transform: skewX(-25deg);
	}

	.tabs .tab.on {
		width: 27px;
		background: #111;
		color: #fff;
		margin-left: 2px;
		clip-path: polygon(0 0, 100% 0, 90% 100%, 12% 100%);
	}

	.command {
		display: flex;
		height: 35px;
		margin-top: 4px;
		padding: 5px 0 1px 4px;
		border-top: 1px solid #777;
		box-sizing: content-box;
	}

	.lines {
		flex: 1;
		margin-left: 3px;
		padding-left: 1px;
		border: 1px solid #555;
		border-bottom: 0;
		background: #fff;
	}

	.lines p,
	.lines label {
		display: flex;
		height: 17px;
		line-height: 13px;
		font-family: 'Liberation Mono', 'Noto Sans CJK SC', monospace;
		font-size: 10px;
	}

	.lines p {
		border-bottom: 1px solid #888;
	}

	.lines label {
		line-height: 16px;
	}

	.lines input {
		flex: 1;
		min-width: 0;
	}

	.modify {
		display: flex;
		flex: none;
		flex-direction: column;
		align-items: center;
		gap: 3px;
		width: 21px;
		box-sizing: border-box;
		padding-top: 5px;
		background: #efefef;
	}

	.modify::before {
		content: '';
		width: 15px;
		height: 2px;
		margin-top: -4px;
		margin-bottom: 2px;
		border: solid #b5b5b5;
		border-width: 1px 0;
	}

	/* status bar */
	footer {
		display: flex;
		align-items: flex-end;
		height: 15px;
		padding-left: 5px;
		box-sizing: border-box;
		border-top: 1px solid #a5a5a5;
		background: #efefef;
		overflow: hidden;
	}

	footer button,
	footer output {
		height: 12px;
		line-height: 12px;
		white-space: nowrap;
	}

	footer .scale {
		width: 53px;
		gap: 2px;
		justify-content: flex-start;
	}

	footer i {
		border-top-color: #111;
	}

	footer output {
		width: 101px;
		margin-left: 5px;
		padding-left: 1px;
		border: 1px solid #b5b5b5;
		border-bottom: 0;
		box-sizing: border-box;
		margin-right: 3px;
		font: 8px/12px 'Liberation Mono', monospace;
	}

	.tgl {
		padding: 0 2px;
		border-right: 1px solid #b5b5b5;
	}

	.tgl.mono {
		font: 8px/12px 'Liberation Mono', monospace;
	}

	.tgl.pressed {
		border: 1px solid #333;
		border-bottom: 0;
		box-sizing: border-box;
	}

	.tray {
		display: flex;
		gap: 2px;
		margin-left: auto;
		margin-right: 13px;
	}

	/* floating pieces */
	.balloon {
		position: absolute;
		right: 4px;
		bottom: 20px;
		width: 120px;
		height: 52px;
		border: 1px solid #222;
		border-radius: 9px;
		background: #ffffdd;
	}

	.balloon button {
		width: 12px;
		height: 12px;
		margin: 6px 7px 1px auto;
		border: 1px solid #333;
		box-sizing: border-box;
		background: #fff;
	}

	.balloon button svg {
		width: 10px;
		height: 10px;
		flex: none;
		stroke: #111;
		stroke-width: 1.5;
	}

	.balloon p {
		margin-right: 9px;
		line-height: 12px;
		text-align: right;
	}

	.tail {
		position: absolute;
		right: 30px;
		top: 51px;
		width: 20px;
		height: 18px;
		fill: none;
		stroke: #222;
	}

	.tail .body {
		fill: #ffffdd;
		stroke: none;
	}

	.gauge {
		position: absolute;
		right: 0;
		bottom: 7px;
		width: 8px;
		height: 51px;
		background: linear-gradient(90deg, #444 3px, #d8a23a 3px, #d8a23a 4px, #4d5a4a 4px);
		border-radius: 3px 0 0 3px;
	}

	.pct {
		position: absolute;
		display: flex;
		align-items: center;
		justify-content: center;
		color: #fff;
		font-weight: bold;
		font-style: italic;
		border-radius: 50%;
		box-sizing: border-box;
	}

	.pct small {
		font-size: 6px;
	}

	.pct.orange {
		right: 12px;
		bottom: 26px;
		width: 20px;
		height: 18px;
		line-height: 9px;
		background: radial-gradient(circle at 50% 30%, #f5a94e, #e07815);
	}

	.pct.orange::after {
		content: '';
		position: absolute;
		left: 18px;
		border: solid transparent;
		border-width: 4px 0 4px 5px;
		border-left-color: #e58a2a;
	}

	.pct.green {
		right: -16px;
		bottom: 80px;
		width: 33px;
		height: 33px;
		padding-right: 12px;
		border: 2px solid #b9c9bd;
		background: radial-gradient(circle at 50% 25%, #7fd49a, #2fa557);
	}

	.brand {
		position: absolute;
		right: 55px;
		bottom: 14px;
		display: flex;
		align-items: center;
		gap: 12px;
		width: 180px;
		height: 85px;
		padding-left: 14px;
		box-sizing: border-box;
		background: #223157;
		color: #c9cbd2;
	}

	.brand svg {
		flex: none;
		width: 36px;
		height: 36px;
		fill: none;
		stroke: #c9cbd2;
		stroke-width: 3;
	}

	.brand .solid {
		fill: #c9cbd2;
		stroke: none;
	}

	.brand strong,
	.brand span {
		display: block;
		white-space: nowrap;
	}

	.brand strong {
		font: 500 26px/28px 'Noto Sans CJK SC', sans-serif;
	}

	.brand span {
		font: 12px/13px 'DejaVu Sans', sans-serif;
	}

	.marker {
		position: absolute;
		top: 0;
		left: 0;
		width: 1000px;
		height: 530px;
		pointer-events: none;
		fill: none;
		stroke: #e0201f;
		stroke-width: 6;
		stroke-linecap: round;
	}

	.marker ellipse {
		fill: #5a10f0;
		stroke: none;
	}
</style>
